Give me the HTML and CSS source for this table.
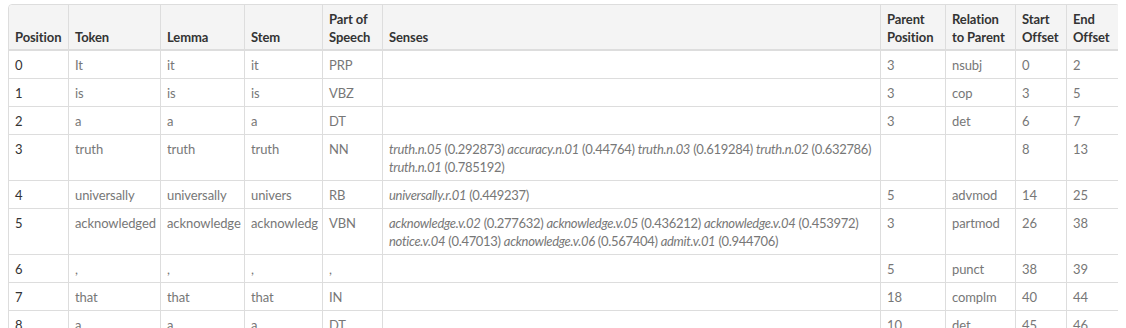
FILE: index.html
```html
<!DOCTYPE html>
<html lang="en">
<head>
    <meta charset="UTF-8">
    <meta name="viewport" content="width=device-width, initial-scale=1.0">
    <title>Token Analysis</title>
    <link rel="stylesheet" href="styles.css">
</head>
<body>
    <table class="tokens">
        <colgroup>
            <col class="c-pos">
            <col class="c-token">
            <col class="c-lemma">
            <col class="c-stem">
            <col class="c-tag">
            <col class="c-senses">
            <col class="c-parent">
            <col class="c-rel">
            <col class="c-start">
            <col class="c-end">
        </colgroup>
        <thead>
            <tr>
                <th>Position</th>
                <th>Token</th>
                <th>Lemma</th>
                <th>Stem</th>
                <th>Part of Speech</th>
                <th>Senses</th>
                <th>Parent Position</th>
                <th>Relation to Parent</th>
                <th>Start Offset</th>
                <th>End Offset</th>
            </tr>
        </thead>
        <tbody>
            <tr>
                <td class="idx">0</td><td>It</td><td>it</td><td>it</td><td>PRP</td>
                <td class="senses"></td>
                <td>3</td><td>nsubj</td><td>0</td><td>2</td>
            </tr>
            <tr>
                <td class="idx">1</td><td>is</td><td>is</td><td>is</td><td>VBZ</td>
                <td class="senses"></td>
                <td>3</td><td>cop</td><td>3</td><td>5</td>
            </tr>
            <tr>
                <td class="idx">2</td><td>a</td><td>a</td><td>a</td><td>DT</td>
                <td class="senses"></td>
                <td>3</td><td>det</td><td>6</td><td>7</td>
            </tr>
            <tr>
                <td class="idx">3</td><td>truth</td><td>truth</td><td>truth</td><td>NN</td>
                <td class="senses"><em>truth.n.05</em> (0.292873) <em>accuracy.n.01</em> (0.44764) <em>truth.n.03</em> (0.619284) <em>truth.n.02</em> (0.632786) <em>truth.n.01</em> (0.785192)</td>
                <td></td><td></td><td>8</td><td>13</td>
            </tr>
            <tr>
                <td class="idx">4</td><td>universally</td><td>universally</td><td>univers</td><td>RB</td>
                <td class="senses"><em>universally.r.01</em> (0.449237)</td>
                <td>5</td><td>advmod</td><td>14</td><td>25</td>
            </tr>
            <tr>
                <td class="idx">5</td><td>acknowledged</td><td>acknowledge</td><td>acknowledg</td><td>VBN</td>
                <td class="senses"><em>acknowledge.v.02</em> (0.277632) <em>acknowledge.v.05</em> (0.436212) <em>acknowledge.v.04</em> (0.453972) <em>notice.v.04</em> (0.47013) <em>acknowledge.v.06</em> (0.567404) <em>admit.v.01</em> (0.944706)</td>
                <td>3</td><td>partmod</td><td>26</td><td>38</td>
            </tr>
            <tr>
                <td class="idx">6</td><td>,</td><td>,</td><td>,</td><td>,</td>
                <td class="senses"></td>
                <td>5</td><td>punct</td><td>38</td><td>39</td>
            </tr>
            <tr>
                <td class="idx">7</td><td>that</td><td>that</td><td>that</td><td>IN</td>
                <td class="senses"></td>
                <td>18</td><td>complm</td><td>40</td><td>44</td>
            </tr>
            <tr>
                <td class="idx">8</td><td>a</td><td>a</td><td>a</td><td>DT</td>
                <td class="senses"></td>
                <td>10</td><td>det</td><td>45</td><td>46</td>
            </tr>
        </tbody>
    </table>
</body>
</html>
```

FILE: styles.css
```css
body {
    margin: 4px 8px;
    font-family: Lato, 'Noto Sans', sans-serif;
    font-size: 13px;
    line-height: 18px;
    letter-spacing: -0.1px;
    color: #777;
    background: #fff;
}
.tokens {
    width: 1110px;
    table-layout: fixed;
    border-collapse: separate;
    border-spacing: 0;
    border: 1px solid #ddd;
    border-radius: 4px;
}
.c-pos { width: 60px; }
.c-token { width: 92px; }
.c-lemma { width: 84px; }
.c-stem { width: 78px; }
.c-tag { width: 60px; }
.c-senses { width: 498px; }
.c-parent { width: 65px; }
.c-rel { width: 70px; }
.c-start { width: 51px; }
.c-end { width: 52px; }
.tokens th,
.tokens td {
    padding: 5px 6px 4px;
    text-align: left;
    border-right: 1px solid #ddd;
    border-bottom: 1px solid #ddd;
    overflow: hidden;
    white-space: nowrap;
}
.tokens th:last-child,
.tokens td:last-child {
    border-right: none;
}
.tokens thead th {
    background-color: #f4f4f4;
    color: #333;
    font-weight: bold;
    vertical-align: bottom;
    white-space: normal;
    border-bottom: 2px solid #ddd;
    padding-bottom: 3px;
}
.tokens thead th:first-child {
    border-top-left-radius: 4px;
}
.tokens thead th:last-child {
    border-top-right-radius: 4px;
}
.tokens td {
    vertical-align: top;
}
.tokens td.senses {
    white-space: normal;
    letter-spacing: -0.3px;
}
.tokens td.idx {
    color: #333;
}
.tokens tbody tr:last-child td {
    border-bottom: none;
}
```
